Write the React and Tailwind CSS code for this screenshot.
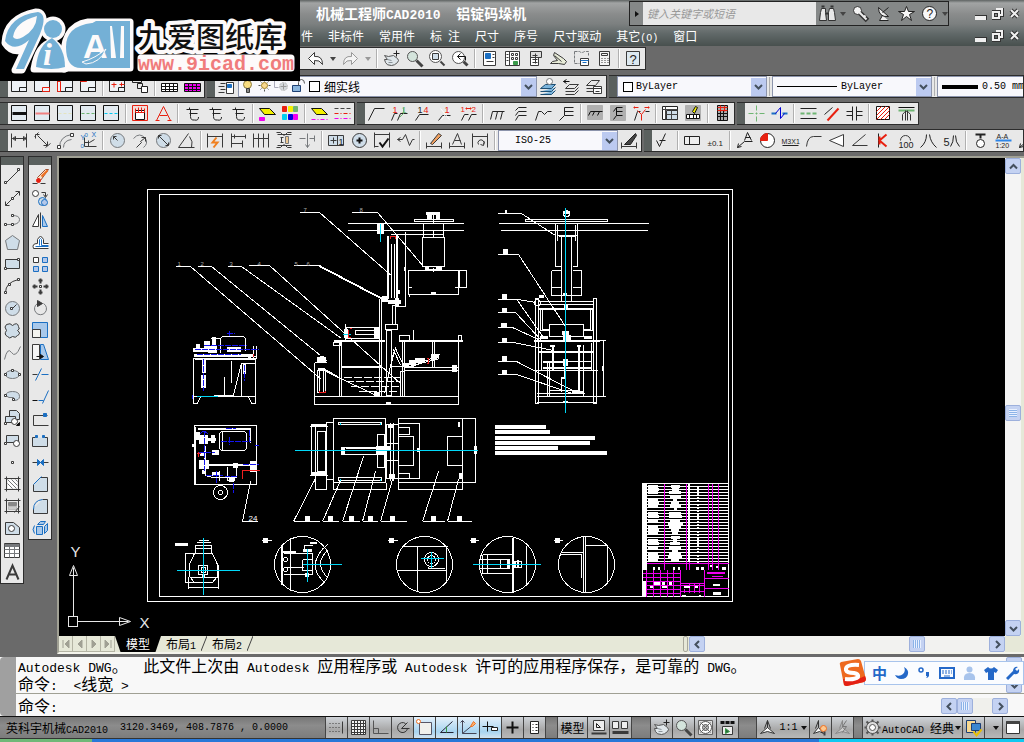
import React from "react";

const K = "#3a3a3a";
const G = "#76797c";
const B = "#1b6fc2";
const R = "#e82010";
const M = "#f000f0";
const L = "#cfdde8";
const GR = "#6fb573";

const c = (x, y, r) => `M${x - r} ${y}a${r} ${r} 0 1 0 ${2 * r} 0a${r} ${r} 0 1 0 ${-2 * r} 0z`;
const r = (x, y, w, h) => `M${x} ${y}h${w}v${h}h${-w}z`;
const t = (text, x, y, size, fill = "#222") => ({ text, x, y, size, fill });

/* Every glyph is a list of [path, stroke, fill, width, dash] or of text items, on a 17px grid. */
const line = (color, w, dash) => [[r(0, 0, 15, 15), "#111", "#e2eaf0"], ["M1 8h14", color, "none", w, dash]];
const hookE = [["M2 4h12M5 2v2M5 8h8M6 4v7q0 4 4 3.500q4 1 4-3", "#222"]];
const table = (color) => [[r(0, 5, 16, 8), "#111", color], ["M4 5v8M8 5v8M12 5v8M0 8h16M0 11h16", "#111"]];

const icons = {
  vp1: [[r(0, 0, 15, 13), "#222", "#eef2f6"], [r(8, 9, 7, 4), "#222"]],
  vp2: [[r(0, 0, 15, 13), "#222", "#eef2f6"], [r(8, 9, 7, 4), R]],
  vp3: [[r(0, 0, 15, 13), "#222", "#eef2f6"], [r(8, 9, 7, 4), "#222"], [r(0, 3, 3, 10), R]],
  vp4: [[r(0, 0, 15, 13), "#222", "#eef2f6"], [r(8, 9, 7, 4), "#222"], [r(0, 0, 6, 3), R, R]],
  vp5: [[r(0, 0, 15, 13), "#222", "#eef2f6"], [r(9, 9, 6, 4), "#222"], ["M2 6h5M4.500 4v5M10 6h5M12 4v4", R]],
  vp6: [[r(0, 0, 9, 4), "#222"], [r(5, 5, 5, 5), "#222"], [r(9, 8, 6, 6), "#222", "#fff"]],
  grid1: table("#fff"),
  grid2: table(M),
  l1: line("#111", 3),
  l2: line("#f08080", 2),
  l3: line("#e4e4c0", 1, "3 2"),
  l4: line(GR, 1, "3 2"),
  l5: line("#00c8f0", 1, "3 2"),
  calip: [[r(0, 0, 15, 15), R, "#f3dcd8"], [r(3, 5, 9, 9), "#111", "#fff"], ["M3 3v4h9V3M6 2v5M9 2v5", R]],
  redA: [["M1 15L8 1l7 14M4 10h8M0 15h4M12 15h4", R]],
  e1: hookE,
  e2: hookE,
  e3: hookE,
  eraseY: [["M0 3h10l6 6H5z", "#111", "#f4f000"], [r(0, 12, 5, 3), M, M]],
  pal: [
    [r(0, 1, 4, 5), R, R], [r(6, 1, 4, 5), "#f4f000", "#f4f000"], [r(11, 1, 4, 5), GR, GR],
    [r(0, 9, 4, 5), "#00d0f0", "#00d0f0"], [r(6, 9, 4, 5), "#0000e0", "#0000e0"], [r(11, 9, 4, 5), M, M],
  ],
  eraseL: [["M0 3h10l6 6H5z", "#111", "#f4f000"], ["M0 14h16", M, "none", 1, "4 2 1 2"]],
  dashes: [["M0 3h16", "#444", "none", 1, "4 2"], ["M0 8h16", R, "none", 1, "4 2 1 2"], ["M0 13h16", M, "none", 1, "4 2 1 2"]],
  ld1: [["M0 15L6 3h10", "#222"]],
  ld2: [["M0 15l3-7h3M6 15l3-7h7", "#222"], ["M12 2v6l-4 4", GR], t("1", 1, 7, 9, R), t("1", 10, 7, 9, GR)],
  ld3: [["M1 15l4-6h9", "#222"], t("1", 3, 7, 9), t("4", 9, 7, 9, R)],
  ld4: [["M1 15l4-5h8", "#222"], ["M3 3l9 11M12 4L4 14", "#fff"], t("1", 7, 7, 9, R)],
  ld5: [["M1 15l3-6h4M8 15l3-6h5", "#222"], t("1", 0, 6, 8, R), t("2", 11, 6, 8, R), ["M5 3h6M6 2v2M10 2v2", R]],
  mm: [["M1 14l2-8h12M6 14l2-8M11 14l2-8", "#222"]],
  st: [["M3 15l3-5h8M3 10l3-4h8M3 5l3-3h8", "#222"]],
  yy: [["M0 15l3-9h3l3 3 3-3h4", "#222"]],
  yf: [["M1 15l5-5h9M6 10V2h9M6 6h9", "#222"]],
  mmg: [[r(0, 0, 15, 14), "#b0b0b0", "#b0b0b0"], ["M1 10l2-4h12M5 10l2-4M10 10l2-4", "#111"]],
  stg: [[r(0, 0, 15, 15), "#b0b0b0", "#b0b0b0"], ["M3 14l3-4h6M6 10V2h6M6 6h6M3 6l3-4", "#111"]],
  yr: [["M1 15l3-9 3 0M12 6h4", "#222"], ["M8 15V9L4 5M8 9l4-5M0 2h5M1 1v2M16 2h-5M15 1v2", R]],
  tb1: [[r(0, 1, 15, 13), "#222", "#fff"], [r(4, 5, 11, 9), "#333", L], ["M0 4h15M3 1v13M4 9h11M9 5v9", "#444"]],
  tb2: [[r(0, 0, 15, 15), "#b0b0b0", "#b0b0b0"], [r(1, 9, 13, 4), "#111", "#fff"], ["M4 9v4M8 9v4M11 9v4", "#111"], ["M7 6l3-5 2 1-3 6z", "#111", "#f4f000"]],
  tb3: [[r(3, 0, 10, 15), "#111", "#aaa"], ["M6 5v10M9 5v10M3 8h10M3 11h10", "#111"], ["M3 2h10M3 5h10M6 0v6M10 0v6", R]],
  cross: [["M8 0v16M0 8h16", GR, "none", 1, "5 2 2 2"]],
  zig: [["M0 8h5M11 8h5", B, "none", 2], ["M4 8l5-6v11l4-5", "#0000d8"]],
  par: [["M0 3h16M0 13h16", "#222"], ["M0 8h16", GR, "none", 2, "4 2"]],
  sl: [["M1 9L9 2", "#222"], ["M4 15L15 3", R, "none", 2]],
  cap: [["M6 1v14M10 1v14M0 6h6M0 10h6M10 6h6M10 10h6", "#222"]],
  hatchR: [[r(1, 1, 13, 13), "#111", "#fff"], ["M1 6l5-5M1 10l9-9M1 14L14 1M5 14l9-9M9 14l5-5", R]],
  thread: [["M0 2h16", "#111"], ["M0 5h16", GR, "none", 2], ["M4 15V9q4-6 8 0v6M7 15V5M9 15V5", "#333"]],
  dLin: [["M0 1v14M15 1v14M1 6h14M1 6l3-2v4zM15 6l-3-2v4z", K]],
  dAli: [["M3 3l10 10M4 0L0 4M16 11l-5 4M1 6V2h4M13 9v4h-4", K]],
  dArc: [["M2 15q0-11 12-13M6 15q0-7 8-8", G], [r(0, 13, 3, 3), K, "#fff"], [r(13, 1, 3, 3), K, "#fff"]],
  dOrd: [["M4 5v9h12M8 8v6M4 10h5l5-3", K], t("Y", 0, 7, 7, B), t("0", 4, 4, 6, B), t("X", 11, 4, 7, B), t("0", 0, 15, 6, B)],
  dRad: [[c(8, 8, 7), G, L], ["M8 8L4 4M4 7V4h3", K]],
  dJog: [["M1 6q6-7 12 0q3 5-2 9", G], ["M13 5l-5 4 1 1-5 5M9 5h4v4", K]],
  dDia: [[c(8, 8, 7), G, L], ["M3 3l10 10M3 6V3h3M13 10v3h-3", K]],
  dAng: [["M10 1L0 15h16M11 4q4 5 2 11", K]],
  dQk: [["M0 1v14M15 1v14M0 4h15", K], ["M9 5l-4 5h5l-4 5", "#f08020", "none", 2]],
  dBas: [["M1 1v14M1 4h14M1 11h11M15 2v4M12 8v7M4 2v4", K]],
  dCon: [["M0 1v14M5 1v14M10 1v14M15 1v14M0 6h15", K]],
  dSp: [["M0 0h4l3 3M15 0h-4L8 3M0 15h4l3-3M15 15h-4l-3-3M1 2h14M1 13h14", K], ["M4 5h3M5 5v5M4 10h3", K], [r(9, 4, 3, 7), G, "#eec890"]],
  dBrk: [["M0 6h6M10 6h5M8 1v14M15 3v6M6 12l2 3 2-3", G]],
  tol: [[r(0, 3, 15, 10), K, L], ["M9 3v10M5 5v6M2 8h6", K], t("1", 10, 12, 9)],
  cen: [[c(8, 8, 7), K, L], ["M5 8h6M8 5v6", "#111", "none", 2]],
  insp: [["M0 2h15M0 0v15M15 0v15M0 14h4", K], ["M5 10l3 4 6-8", "#111", "none", 2]],
  jogl: [["M0 7l3-2M0 7h5l3-5 4 11 3-6h2M0 7l3 2", K]],
  dEd: [["M0 10v6M15 10v6M0 14h15", K], ["M4 11L12 1l3 2-9 9z", K, "#f0a060"]],
  dTe: [["M0 10v6M15 10v6M0 14h15M3 12L8 1l4 11M5 8h6", K]],
  dUp: [["M0 1v14M15 1v14M0 4h15", K], ["M6 12a3 3 0 1 1 5 0M12 9l-1 4-3-1", K]],
  dSt: [["M0 10v6M15 10v6M0 14h15", K], ["M3 12L14 1l1 2-6 9z", "#222", "#444"]],
  rough: [["M1 8l3 6L10 1M4 8h6", "#222"]],
  datum: [[r(0, 4, 15, 8), "#222", "#eee"], ["M5 4v8", "#222"]],
  pm: [t("±0.1", 0, 13, 8)],
  ldA: [["M1 15l7-6h8M1 15l4-1M1 15l1-4M8 8l3-8 4 8M9 5h5", "#222"]],
  pie: [[c(8, 8, 7), "#222", "#fff"], ["M8 8V1A7 7 0 0 0 1 8z", R, R]],
  m3: [t("M3X1", -1, 11, 7), ["M0 13h16", "#222"]],
  ch: [["M1 14q1-10 7-10h8", K]],
  tri: [["M1 8l14-6v12z", K, "#fff"]],
  ang: [["M14 2L1 13h15", K]],
  kk: [["M4 1v14", "#222"], ["M12 2L5 8l7 6M5 8V4M5 8v4", R, "none", 2]],
  arc100: [["M3 8a5 5 0 0 1 10 0", K], t("100", 1, 15, 9)],
  ba: [["M6 2q0 8-6 13M9 2q1 8 7 13", "#222"]],
  ba5: [t("5", 0, 13, 11), ["M10 3q0 7-3 11M12 3q0 7 4 11", "#222"]],
  bal: [["M3 2h10M8 2v4", "#222", "none", 2], [c(8, 11, 4), "#222", "#fff"]],
  aa: [t("A-A", 1, 6, 7), ["M0 8h16", "#2e86e8", "none", 2], t("1:20", 0, 15, 7)],
  undo: [["M7 2v4q8-1 8 8q-3-5-8-4v4L1 8z", K, "#fff"]],
  redo: [["M9 2v4q-8-1-8 8q3-5 8-4v4l6-6z", "#999", "#f4f4f4"]],
  pan: [["M1 5l4 1 5-1 4 3q2 2 0 4-3 3-6 3-5 0-6-3l-1-3 3 0z", "#555", "#dfe6ea"], ["M4 9l4 1M5 12l4 0", "#8a9298"], ["M13 0v6M10 3h6", "#222"]],
  zoom: [["M10 10l6 6", "#444", "none", 3], [c(6, 6, 5), "#555", "#d4e4dc"]],
  zoomW: [["M11 11l4 4", "#444", "none", 2], [c(6, 6, 6), "#555", "#fff"], [r(3, 3, 6, 6), K, L]],
  zoomP: [["M11 11l4 4", "#444", "none", 3], [c(6, 7, 6), "#555", "#fff"], ["M5 6h8v4M5 6l3-3M5 6l3 3", "#111"]],
  prop: [[r(2, 1, 12, 14), K, "#fff"], [r(4, 3, 5, 5), B, B], ["M11 4h2M11 7h2M5 11h7", K]],
  dc: [[r(1, 1, 14, 14), K, "#fff"], [r(7, 3, 2, 2), K], [r(11, 3, 2, 2), K], [r(7, 7, 2, 2), K], [r(11, 7, 2, 2), K], ["M5 1v14M2 4h2M2 7h2M2 10h2", K], [r(9, 11, 4, 3), "#3a9a4a", "#3a9a4a"]],
  tp: [[r(3, 3, 8, 12), K, "#fff"], [r(3, 1, 11, 6), K, "#ddd"], ["M5 5h5M5 9h5M5 12h5M8 3v10", K]],
  sheet: [["M0 13h8l6 1 2-3-3-3-9-6-1 3 4 5-5 1z", K, "#e8ecd8"], ["M4 5l7 6", K]],
  mark: [["M1 1h5q2 2 5 0h4v4M1 1v12h5", G, "none", 1, "3 1"], [r(7, 8, 8, 7), K, "#fff"], ["M7 10h8M9 12h4", B]],
  calc: [[r(3, 1, 10, 14), K, "#f4f4f4"], [r(5, 3, 6, 2), K], ["M5 8h7M5 10h7M5 12h7", K, "none", 1, "1 2"]],
  help: [[r(1, 1, 13, 14), K, "#dce8f0"], t("?", 4, 13, 13)],
  lyr: [[r(8, 4, 7, 11), K, "#fff"], [r(9, 6, 4, 3), B, B], ["M0 2h8M2 5h5M0 8h6M2 11h5M0 14h6", K]],
  ly1: [["M0 10h11l4-4H5zM0 13h11l4-4M0 16h11l4-4", "#1d4f74", "#7ab4dc"], [c(9, 3, 3), G, "#fff"]],
  ly2: [["M2 10h9l4-4H6zM2 13h9l4-4M2 16h9l4-4", K], ["M0 3h6M0 3l3-2M0 3l3 2", "#111"]],
  ly3: [["M0 7h9l4-5H5zM0 10h8M0 13h7", K], [r(7, 8, 8, 7), K, "#fff"], ["M7 10h8M9 13h4", K]],
  bulb: [[c(8, 6, 4), "#8a7a40", "#f8dc80"], [r(7, 10, 3, 4), K, "#888"]],
  sun: [[c(8, 7, 3), "#a08020", "#f8d890"], ["M8 1v2M8 11v2M2 7h2M12 7h2M4 3l1 1M12 3l-1 1M4 11l1-1M12 11l-1-1", "#555"]],
  frz: [[c(10, 8, 4), "#bbb", "#d4d8dc", 1, "2 1"], ["M1 1v8h4M1 1h3", "#aab"], ["M10 5v6M7 8h6", "#999"]],
  lock: [[r(2, 7, 8, 6), "#1d3f74", "#8ab4dc"], ["M8 7V4q0-3 3-3t3 4", "#555"]],
  pLine: [["M2 14L14 2", K], [r(0, 13, 2, 2), K, "#fff"], [r(13, 0, 2, 2), K, "#fff"]],
  pXl: [["M1 15L15 1M1 11v4h4M15 5V1h-4", K], [r(7, 7, 2, 2), K, "#fff"]],
  pPl: [["M1 12h8q6-1 6-5t-7-4", G, "none", 1], [r(0, 11, 2, 2), K, "#fff"], [r(7, 11, 2, 2), K, "#fff"], [r(7, 2, 2, 2), K, "#fff"]],
  pPg: [["M8 1l7 5-2 9H3L1 6z", G, L]],
  pRe: [[r(1, 3, 14, 9), K, L], [r(0, 11, 2, 2), K, "#fff"], [r(13, 2, 2, 2), K, "#fff"]],
  pAr: [["M1 14q0-10 13-13", K], [r(0, 13, 2, 2), K, "#fff"], [r(4, 5, 2, 2), K, "#fff"], [r(13, 0, 2, 2), K, "#fff"]],
  pCi: [[c(8, 8, 7), G, L], ["M8 8l4-4", K], [r(6, 7, 2, 2), K, "#fff"]],
  pCl: [["M8 3q5-4 6 1 2 3-1 4 4 3 0 5-2 3-5 1-3 3-5 0-4-2-1-6-3-4 0-6 4-2 6 1z", K, L]],
  pSp: [["M0 15Q3 2 7 8t9-6", G, "none", 1]],
  pEl: [["M1 8a7 4 0 1 0 14 0a7 4 0 1 0-14 0", G, L], [r(0, 7, 2, 2), K, "#fff"], [r(7, 3, 2, 2), K, "#fff"], [r(14, 7, 2, 2), K, "#fff"]],
  pEa: [["M1 7q1-4 7-4 7 0 7 5 0 4-6 4V9q-5 1-8-2z", G, L], [r(0, 6, 2, 2), K, "#fff"], [r(8, 10, 2, 2), K, "#fff"]],
  pIn: [["M5 0h7l3 3v6H5z", K, L], [r(1, 6, 10, 6), K, L], [c(10, 11, 3), K, "#fff"], ["M12 15h3v-3z", "#111", "#111"], [r(0, 12, 2, 2), K, "#fff"]],
  pBl: [[r(2, 3, 12, 7), K, L], [c(12, 11, 3), K, "#fff"], [r(0, 10, 2, 2), K, "#fff"]],
  pPt: [[r(7, 7, 2, 2), K, "#fff"]],
  pHa: [["M2 0v15M14 0v15M0 2h16M0 13h16", K], [r(3, 3, 10, 9), "#eee", "#fff"], ["M3 3l9 9M7 3l6 6M3 7l5 5M11 3l2 2", G]],
  pGr: [["M2 0v15M14 0v15M0 2h16M0 13h16", K], [r(4, 4, 8, 3), "#888", "#888"], [r(4, 8, 8, 3), "#bbb", "#ccc"], ["M10 14l5-6", K]],
  pRg: [["M1 2h8l6 5v7H1z", K, L], [c(7, 8, 3), K, "#fff"]],
  pTa: [[r(0, 1, 15, 14), K, "#fff"], ["M0 3h15", G, "none", 3], ["M0 7h15M0 11h15M5 4v11M10 4v11", G]],
  pTx: [["M2 15L8 1l6 14M4 10h8", K, "none", 2]],
  mEr: [["M0 15h16", K, "none", 1, "5 3"], ["M5 9l8-8h3l-8 11z", "#a05030", "#f6e0c8"], [c(6, 12, 2), R, R], ["M9 8L15 2", "#f07020", "none", 2]],
  mCo: [[c(3, 3, 3), K, "#fff"], [c(10, 11, 4), B, L], [c(12, 12, 3), B, "#b4c8ea"], ["M9 2h4v4M11 4l2 3 2-3", K]],
  mMi: [["M0 14h6V2z", K, "#fff"], ["M15 14h-5V3z", B, "#a8c8ea"], ["M8 0v16", K]],
  mOf: [["M16 14H1q-2-5 4-5V5q3-6 6 0v4h5", K, "#fff"], ["M16 12H3M7 11V5q1-2 2 0v6h7", B]],
  mAr: [[r(1, 1, 5, 5), K, "#fff"], [r(10, 1, 5, 5), B, "#b4c8ea"], [r(1, 10, 5, 5), B, "#b4c8ea"], [r(10, 10, 5, 5), B, "#b4c8ea"]],
  mMv: [[r(7, 7, 2, 2), K, "#fff"], ["M8 0v5M8 11v5M0 8h5M11 8h5M6 2h4M6 14h4M2 6v4M14 6v4", K, "none", 2]],
  mRo: [["M5 3a6 6 0 1 0 6 0", G, "none", 1], ["M5 0l5 3-5 3z", K, K]],
  mSc: [[r(0, 0, 15, 15), B, "#a8c8ea"], [r(0, 7, 8, 8), K, "#f4f4f0"]],
  mSt: [[r(0, 0, 7, 15), K, "#f4f4f4"], ["M8 0h3l5 15H8z", B, "#a8c8ea"], ["M4 12h6M8 10l3 2-3 2z", "#111", "#111"]],
  mTr: [["M0 8h5", K], ["M3 14l6-12M9 8h7", B, "none", 1, "14 1 3 1"]],
  mEx: [["M0 12h5", "#111"], ["M6 12h5M10 15l6-13", B]],
  mBp: [["M15 5H1v10h15", K], [r(11, 3, 3, 3), B, B]],
  mBr: [["M0 5v9h15V5M0 5h3M12 5h3", K, L], [r(3, 3, 2, 2), B, B], [r(10, 3, 2, 2), B, B]],
  mJo: [["M0 8h16", K], ["M5 5v6l3-3zM11 5v6l-3-3z", B, B]],
  mCh: [["M8 1h7v14H1V8", K, L], ["M1 8l8-8", B, "none", 1]],
  mFi: [["M10 1h5v14H1V10", K, L], ["M1 11q0-9 9-10", B, "none", 1]],
  mXp: [[r(4, 6, 6, 8), B, "#a8c8ea"], ["M5 4l3-3h5l-2 3zM12 6l3-3v7l-3 3zM2 5q-3 4 0 8", B, "#a8c8ea"]],
  sSn: [["M1 4h12M1 8h12M1 12h12", K, "none", 1, "1 2"], ["M14 2v12", K]],
  sGr: [["M1 1h14v14H1zM4 1v14M7 1v14M10 1v14M13 1v14M1 4h14M1 7h14M1 10h14M1 13h14", K, "#f4f4f4"]],
  sOr: [["M1 1v13h15M1 9h5v5", "#555"]],
  sPo: [["M11 4a5 5 0 1 0 2 5M7 9l6-6M7 9h8", "#333"]],
  sOs: [[r(3, 3, 12, 12), "#556", "#f0f0ec"], [c(2, 2, 2), "#f07020", "#fff"]],
  s3d: [["M14 2L2 13h13", "#223"], ["M8 7v6", "#3a9a4a"]],
  sDu: [["M2 1v13h14M2 14L14 4M0 3l2-2 2 2", "#445"], ["M10 7l3-5 2 2-3 3z", "#f07020", "#f8b070"]],
  sDy: [["M5 2v10M0 7h11", "#111"], [r(9, 8, 6, 3), "#222", "#fff"]],
  sLw: [["M8 2v12M2 8h12", "#111", "none", 2]],
  sQp: [[r(4, 2, 8, 12), "#222", "#fff"], ["M6 5h1M9 5h2M6 8h1M9 8h2M6 11h1M9 11h2", "#222"]],
  sL1: [[r(3, 1, 11, 10), K, "#eee"], ["M6 4v4h4z", "#222"], ["M1 14h15", K, "none", 2]],
  sL2: [[r(0, 2, 6, 7), K, "#eee"], [r(9, 2, 6, 7), K, "#eee"], ["M0 13h16", K, "none", 3]],
  whl: [[r(1, 1, 14, 14), "#666", "#e0e0e0"], [c(8, 8, 6), "#555", "#fff"], [c(8, 8, 3), "#555", "#bbb"], ["M3 3l10 10M13 3L3 13", "#666"]],
  mot: [["M1 3h14", "#111", "none", 3, "4 1"], [r(3, 7, 10, 8), K, "#eee"], ["M6 9v5l4-2z", "#3a9a4a", "#2a6a3a"]],
  ann: [["M8 1v7l-7 6 7-2 7 2-7-6M8 1L5 9M8 1l3 8", "#333", "#fff"]],
  annV: [["M6 1v7l-5 6 6-2 4 2-5-6M6 1L3 9", "#333", "#fff"], [c(11, 9, 3), "#f07020", "#fcc890"], ["M12 12v4", "#444", "none", 2]],
  annA: [["M8 1v7l-7 6 7-2 7 2-7-6M8 1L5 9", "#888", "#ccc"], ["M12 1L8 7h4l-4 6", "#777"]],
  gear: [[c(8, 8, 6), "#555", "#ddd"], [c(8, 8, 3), "#555", "#fff"], ["M8 0v2M8 14v2M0 8h2M14 8h2M2 2l2 2M14 2l-2 2M2 14l2-2M14 14l-2-2", "#555", "none", 2]],
  doc: [[r(1, 1, 9, 12), "#1d3f74", "#f8d890"], [r(6, 4, 9, 7), "#1d3f74", "#3a86d0"], ["M8 12l3 4 5-6", "#e8c000", "none", 2]],
  win: [[r(1, 2, 13, 12), "#333", "#fff"], ["M1 3h13", "#444", "none", 3]],
  bino: [["M2 3h4v4l1 8H0l1-8zM10 3h4l1 4 1 8H9V7z", "#333", "#e8e8e8"], ["M6 8h3M2 1h3M11 1h3", "#333", "none", 2]],
  key: [["M7 7l8 8M11 12l2-2", "#333", "none", 5], [c(5, 5, 4), "#333", "#f4f4f4"], ["M7 7l7 7M11 12l2-2", "#eee", "none", 2]],
  sat: [["M3 2q0 10 10 9zM7 7l6-5M7 10l-3 5h9", "#222", "#f0f0f0"]],
  star: [["M8 1l2 5h6l-5 3 2 6-5-4-5 4 2-6-5-3h6z", "#222", "#f8f8f8"]],
  qm: [[c(8, 8, 7), "#222", "#f8f8f8"], t("?", 5, 12, 12)],
};

function Icon({ name, className = "" }) {
  return (
    <svg viewBox="-0.5 -0.5 17 17" width="17" height="17" aria-hidden="true" className={"block shrink-0 overflow-visible " + className}>
      {icons[name].map((s, i) =>
        s.text ? (
          <text key={i} x={s.x} y={s.y} fontSize={s.size} fill={s.fill} fontFamily="Liberation Sans, sans-serif">{s.text}</text>
        ) : (
          <path key={i} d={s[0]} stroke={s[1]} fill={s[2] || "none"} strokeWidth={s[3] || 1} strokeDasharray={s[4]} />
        )
      )}
    </svg>
  );
}

function Tool({ name }) {
  return (
    <button type="button" aria-label={name} className="flex h-[21px] w-[23px] shrink-0 items-center justify-center hover:bg-sky-100">
      <Icon name={name} />
    </button>
  );
}

function Tools({ list }) {
  return list.split(" ").map((n, i) =>
    n === "|" ? <span key={i} className="mx-[2px] h-[19px] w-[2px] shrink-0 self-center border-l border-[#b0b0b0] bg-white" /> : <Tool key={i} name={n} />
  );
}

const Grip = () => (
  <span className="flex w-[8px] shrink-0 self-stretch items-center justify-center bg-[#5a605e]">
    <span className="h-[17px] w-[5px] bg-[radial-gradient(#111_40%,transparent_45%)] bg-[length:2px_2px]" />
  </span>
);

const Bar = ({ children, className = "" }) => (
  <div className={"flex h-[23px] shrink-0 items-center overflow-hidden border-y border-r border-[#2c2c2c] bg-[#e8e8e8] " + className}>
    <Grip />
    {children}
  </div>
);

/* Latin runs take the half-width mono face, the rest stays in the CJK face. */
function Mixed({ children, latin }) {
  return children.split(/([\x20-\x7e]+)/).map((s, i) => (i % 2 ? <span key={i} className={"leading-none whitespace-pre " + latin}>{s}</span> : s));
}

const Chevron = ({ d }) => (
  <svg viewBox="0 0 9 9" width="9" height="9" aria-hidden="true" className="block shrink-0"><path d={d} stroke="#44505e" strokeWidth="2" fill="none" /></svg>
);
const CH = { down: "M1 3l3.500 3.500L8 3", up: "M1 6.500L4.500 3 8 6.500", left: "M6 1L2.500 4.500 6 8", right: "M3 1l3.500 3.500L3 8" };

function Combo({ label, options, children, className = "", selectClass = "" }) {
  return (
    <div className={"flex h-[21px] shrink-0 items-center border border-[#8c94ac] bg-[#f8f8fc] " + className}>
      {children}
      <select aria-label={label} className={"min-w-0 flex-1 appearance-none self-stretch bg-transparent text-black outline-none " + selectClass}>
        {options.map((o) => <option key={o}>{o}</option>)}
      </select>
      <span className="pointer-events-none flex h-[18px] w-[15px] shrink-0 items-center justify-center bg-[#bccaf0]"><Chevron d={CH.down} /></span>
    </div>
  );
}

const Arrow = ({ dir, className = "" }) => (
  <button type="button" aria-label={"Scroll " + dir} className={"flex h-4 w-4 shrink-0 items-center justify-center rounded-xs border border-[#9db0dc] bg-[#c4d2f2] " + className}>
    <Chevron d={CH[dir]} />
  </button>
);
const Thumb = ({ vertical }) => (
  <span className="flex h-4 w-4 shrink-0 items-center justify-center rounded-xs border border-[#9db0dc] bg-[#c4d2f2]">
    <span className={vertical ? "h-[8px] w-[8px] bg-[repeating-linear-gradient(0deg,#8cb4e8_0_1px,#e8f0ff_1px_2px)]" : "h-[8px] w-[8px] bg-[repeating-linear-gradient(90deg,#8cb4e8_0_1px,#e8f0ff_1px_2px)]"} />
  </span>
);

function Logo() {
  const outline = { stroke: "#fdfafa", strokeLinejoin: "round", paintOrder: "stroke" };
  const blue = "#74b0d6";
  return (
    <div className="absolute top-0 left-0 z-10 bg-black">
      <svg viewBox="0 0 300 81" width="300" height="81" role="img" aria-label="九爱图纸库" className="block">
        <g fill="#fdfafa" stroke="#fdfafa" strokeWidth="7" strokeLinejoin="round">
          <path d="M5 43Q6 18 36 12q9 0 7 14L22 70h-7l10-21Q12 54 5 43z" />
          <path d="M64 69Q60 26 88 22h42v46H64z" />
          <circle cx="53" cy="29" r="9" />
          <path d="M34 69q4-24 18-27 12 6 13 27z" />
          <path d="M141 58H291V68H141z" />
        </g>
        <path d="M16 69l13-29q-15 13-24 1Q8 16 38 12q10 2 2 22L24 69z" fill={blue} />
        <path d="M13 37Q15 22 37 16q-1 14-14 21-7 4-10 0z" fill="#fdfafa" />
        <circle cx="53" cy="29" r="9" fill={blue} />
        <path d="M36 67q2-22 16-29 13 10 13 29-13 4-29 0z" fill={blue} />
        <g fontFamily="Liberation Serif, serif" fontStyle="italic" fontWeight="700">
          <text x="43" y="65" fontSize="32" fill="#fdfafa">i</text>
        </g>
        <path d="M92 23Q66 26 66 47t15 21h49V21h-34q-18 9-20 27 0 12 5 12-2-18 17-33z" fill={blue} />
        <g fontFamily="Liberation Sans, sans-serif" fontWeight="700" fill="#fdfafa">
          <text x="83" y="58" fontSize="34">A</text>
          <path d="M110 26h2l4 32h-5zM121 26h3v32h-4z" />
        </g>
        <path d="M82 62q14-4 24-13-6 14-20 15z" fill={blue} stroke="#fdfafa" />
        <text x="138" y="48" fontSize="29" fontWeight="500" fill="#111" strokeWidth="8" fontFamily="Noto Sans CJK SC, sans-serif" {...outline}>九爱图纸库</text>
        <text x="138" y="70" fontSize="20" fontWeight="700" fill="#f07c7c" fontFamily="Liberation Mono, monospace">www.9icad.com</text>
      </svg>
    </div>
  );
}

const WinButtons = () => (
  <div className="flex w-[75px] shrink-0 items-center justify-end gap-[5px] pr-[3px]">
    {[["Minimize", "M1 9h9v2H1z"], ["Restore", "M4 1h6v6H8M1 4h6v6H1z"], ["Close", "M2 2l7 7M9 2L2 9"]].map(([n, d]) => (
      <button key={n} type="button" aria-label={n}>
        <svg viewBox="0 0 12 12" width="12" height="12" className="block">
          <path d={d} stroke="#333" strokeWidth="4" fill="none" /><path d={d} stroke="#f0f0f0" strokeWidth="2" fill="none" />
        </svg>
      </button>
    ))}
  </div>
);

const Caret = ({ color }) => <svg viewBox="0 0 6 4" width="6" height="4" aria-hidden="true" className="shrink-0"><path d="M0 0h6L3 4z" fill={color} /></svg>;

function Header() {
  const menus = ["件", "非标件", "常用件", "标 注", "尺寸", "序号", "尺寸驱动", "其它(O)", "窗口"];
  return (
    <header className="flex h-[46px] shrink-0 flex-col bg-[linear-gradient(#5f6463_0,#a2a4a4_3px,#8a8c8c_14px,#7c8080_24px,#606868_34px,#48504e_46px)] text-white">
      <div className="flex h-[26px] pt-[1px]">
        <h1 className="min-w-0 flex-1 truncate pl-[316px] text-sm leading-6 font-bold"><Mixed latin="font-[Liberation_Mono] text-[13px]">机械工程师CAD2010  铝锭码垛机</Mixed></h1>
        <div className="flex w-[320px] shrink-0 items-center border border-[#222] bg-[#858888]">
          <button type="button" aria-label="Expand" className="flex w-[13px] shrink-0 justify-center"><svg viewBox="0 0 4 6" width="4" height="6"><path d="M0 0v6l4-3z" fill="#111" /></svg></button>
          <input aria-label="搜索" placeholder="键入关键字或短语" className="w-[180px] min-w-0 self-stretch bg-[#e8e8e8] px-1 text-[11px] italic placeholder:text-[#999]" />
          <button type="button" aria-label="Search" className="ml-[3px]"><Icon name="bino" /></button>
          <span className="ml-1"><Caret color="#444" /></span>
          <button type="button" aria-label="Key" className="ml-[6px]"><Icon name="key" /></button>
          <button type="button" aria-label="Communication" className="ml-[6px]"><Icon name="sat" /></button>
          <button type="button" aria-label="Favorites" className="ml-[6px]"><Icon name="star" /></button>
          <button type="button" aria-label="Help" className="ml-[6px]"><Icon name="qm" /></button>
          <span className="ml-1"><Caret color="#444" /></span>
        </div>
        <WinButtons />
      </div>
      <div className="flex h-[20px] items-center">
        <nav className="flex min-w-0 flex-1 gap-[15px] pl-[301px] text-xs leading-5 whitespace-nowrap">
          {menus.map((m) => <a key={m} href="#menu"><Mixed latin="font-[Liberation_Mono] text-[10px]">{m}</Mixed></a>)}
        </nav>
        <WinButtons />
      </div>
    </header>
  );
}

function Toolbars() {
  return (
    <div className="flex shrink-0 flex-col gap-[4px] overflow-hidden pt-[1px] pb-[4px]">
      <div className="mb-[1px] flex">
        <div className="ml-[300px] flex h-[23px] items-center border-y border-r border-[#2c2c2c] bg-[#e8e8e8] pl-1">
          <Tool name="undo" /><span className="px-[3px]"><Caret color="#444" /></span>
          <Tool name="redo" /><span className="px-[3px]"><Caret color="#999" /></span>
          <Tools list="| pan zoom zoomW zoomP | prop dc tp sheet mark calc | help" />
        </div>
      </div>
      <div className="flex gap-[2px]">
        <Bar><Tools list="vp1 vp2 vp3 vp4 | vp5 vp6 | grid1 grid2" /></Bar>
        <Bar>
          <Tool name="lyr" />
          <Combo label="图层" options={["细实线"]} className="w-[299px]" selectClass="pl-1 text-xs">
            <Icon name="bulb" /><Icon name="sun" /><Icon name="frz" /><Icon name="lock" />
            <span className="ml-[2px] h-[11px] w-[11px] border border-black bg-white" />
          </Combo>
          <Tools list="ly1 ly2 ly3" />
        </Bar>
        <Bar className="flex-1">
          <Combo label="颜色" options={["ByLayer"]} className="w-[150px]" selectClass="pl-[3px] font-[Liberation_Mono] text-[10px]">
            <span className="ml-[5px] h-[10px] w-[10px] border border-black bg-white" />
          </Combo>
          <span className="mx-[2px] h-[19px] w-[2px] border-l border-[#b0b0b0]" />
          <Combo label="线型" options={["ByLayer"]} className="w-[160px]" selectClass="pl-1 font-[Liberation_Mono] text-[10px]">
            <span className="ml-1 h-px w-[60px] bg-black" />
          </Combo>
          <span className="mx-[2px] h-[19px] w-[2px] border-l border-[#b0b0b0]" />
          <Combo label="线宽" options={["0.50 mm"]} className="w-[160px]" selectClass="pl-1 font-[Liberation_Mono] text-[10px]">
            <span className="ml-1 h-[4px] w-[36px] bg-black" />
          </Combo>
        </Bar>
      </div>
      <div className="flex gap-[2px]">
        <Bar><Tools list="l1 l2 l3 l4 l5 | calip redA | e1 e2 e3 | eraseY pal | eraseL dashes" /></Bar>
        <Bar><Tools list="ld1 ld2 ld3 ld4 ld5 | mm st yy yf | mmg stg yr | tb1 tb2 | tb3" /></Bar>
        <Bar><Tools list="cross zig | par sl cap | hatchR thread" /></Bar>
      </div>
      <div className="flex gap-[2px]">
        <Bar>
          <Tools list="dLin dAli dArc dOrd | dRad dJog dDia dAng | dQk dBas dCon dSp dBrk | tol cen insp jogl | dEd dTe dUp |" />
          <Combo label="标注样式" options={["ISO-25"]} className="w-[120px]" selectClass="pl-4 font-[Liberation_Mono] text-[10px]" />
          <Tool name="dSt" />
        </Bar>
        <Bar className="flex-1"><Tools list="rough | datum pm | ldA pie m3 ch tri ang kk arc100 ba ba5 | bal aa ldA" /></Bar>
      </div>
    </div>
  );
}

const Palette = ({ list, label }) => (
  <div role="toolbar" aria-label={label} className="flex w-6 shrink-0 flex-col self-start border border-[#2c2c2c] bg-[#e8e8e8]">
    <span className="flex h-[8px] items-center justify-center bg-[#5a605e]"><span className="h-[4px] w-[14px] bg-[radial-gradient(#111_40%,transparent_45%)] bg-[length:2px_2px]" /></span>
    {list.split(" ").map((n) => (
      <button key={n} type="button" aria-label={n} className="flex h-[22px] w-[22px] items-start pt-[3px] pl-[3px] hover:bg-sky-100"><Icon name={n} /></button>
    ))}
  </div>
);

/* Sheet geometry, in sheet units. */
const box = (x1, y1, x2, y2) => `M${x1} ${y1}H${x2}V${y2}H${x1}z`;

const white = [
  box(147, 189, 732, 601), box(159, 194, 728, 596),
  // leaders of the front view
  "M299 212h20L392 276M351 212h26L423 266M175 266h15L321 379M197 266h14L320 355M227 266h14L341 338M248 265h21L341 330L400 383M293 265h26L382 298M319 266L382 299",
  // beams and hoist
  "M347 223H463M347 230H463M390 234H443", box(414, 219, 453, 221), "M423 222V237M443 222V237M433 214V222M433 230V237", box(422, 237, 444, 266),
  box(408, 270, 458, 294), "M409 294v2M408 287h3M454 287h4", box(459, 270, 466, 287), "M433 267v4M428 269h12",
  // mast
  "M387 235V298M388 235V298M391 243V297M394 243V297M396 235V298M397 235V298M405 231V306H395", box(392, 305, 395, 324), box(385, 324, 397, 329), box(386, 330, 391, 395), "M379 298V396M381 298V396",
  // bench
  "M345 323v17", box(346, 327, 379, 338), box(355, 330, 379, 334), "M333 340H384M333 341H384M398 340H462M398 341H462", box(333, 342, 340, 345), box(339, 341, 341, 396), "M402 341V396M404 341V396M432 341V366M434 341V366M458 341V396M341 366H380M341 367H380M404 367H458M404 370H458",
  box(399, 335, 409, 340), "M413 329v11", box(458, 335, 461, 340), box(314, 396, 458, 404), "M314 362V396M314 362H326M317 361q4-11 9 0", box(317, 370, 325, 392), "M319 370v22M323 370v22", "M322 369L338 377L376 395M323 368L337 376",
  "M390 366L395 348L403 365M384 393L393 352M390 366H412L440 354M393 349l7 16M400 396V371h4M405 367l34-9",
  // tank elevation
  box(193, 358, 255, 396), "M193 356H255M194 359H255M231 360V382M224 376V396M213 395H233L241 363H255M241 363V396H193", "M193 396V403H197L200 396M248 396L251 403H255V396", "M220 352V339q0-3 4-3H241q4 0 4 3V350M210 338h10M253 345V358M256 345V358",
  // side view
  "M498 223H648M500 230H647", box(525, 219, 607, 221), "M555 222V266H560M577 222V266H572M557 224V240M575 224V240M561 236V300M571 236V300M557 235H576M558 236H575", "M551 270H560M572 270H581M551 270V295H581V270M551 287H560M572 287H581",
  box(535, 298, 538, 403), box(593, 298, 596, 403), "M538 301H593M538 304H593M538 308H593M538 309H593", "M540 309V330H548M542 309V329H548M590 309V329H583M592 309V330H583", box(549, 324, 583, 336), "M533 340H605M533 341H599M538 351H593M538 352H593M541 342V370M591 342V370M542 361H591M542 362H566M542 367H591M542 368H591M535 370H597M603 340V396M597 396H605M536 396H603M536 393H584M536 402H596M547 362V395M549 362V395M552 345V370M553 345V370M578 345V392M583 344V396M579 345V392M564 358V378H561V391M548 390H578",
  "M497 213h24L555 235M497 254h21L565 326M497 299h20L535 302M517 300L543 337M497 312h18L541 340M497 327h15L538 339M497 342h16L553 350M497 361h19L578 393M497 374h19L572 393",
  c(537, 302, 3), c(566, 213, 3),
  // tank plan
  box(194, 425, 256, 484), "M195 426V483M197 428H250V442M197 429H250M222 431H243q3 0 3 4V446q0 4-3 4H222q-3 0-3-4V435q0-4 3-4zM222 431V450M198 464H256M198 465H256M204 445V464M205 445V475L212 477H236V465M227 466V480H234V475M216 480V470M219 480V470", c(220, 492, 7), c(220, 492, 2), "M250 481L242 521H257",
  // main plan
  "M309 426H327M309 475H327M311 426V475M315 426V489H326V426", box(317, 431, 325, 471), box(326, 422, 333, 479), box(333, 418, 385, 482), box(338, 422, 381, 424), box(338, 477, 381, 480), box(341, 447, 385, 454), "M345 448H382", box(377, 434, 384, 467), box(386, 424, 398, 478), "M390 422V480M393 422V480M386 443H398M386 460H398M333 482V489H386V482",
  "M398 418H475V482H398zM462 418V489M398 482V489H462", box(398, 423, 419, 478), box(398, 427, 409, 434), box(398, 436, 413, 465), box(398, 473, 409, 478), box(447, 436, 462, 465),
  "M293 521H319M293 521L315 478M322 521H338M322 521L340 480M342 521H359M342 521L363 456M362 521H377M362 521L375 471M380 521H406M380 521L392 479M422 521H444M422 521L438 471M447 521H471M447 521L458 479",
  // details
  "M195 552V545H211V552M196 542H210M198 540H208M195 548H211M194 553L189 564V576L194 582H212L217 576V564L212 553zM184 553H194M184 582H198M185 553V582M188 587H218M188 576V588M218 564V588M189 577H217", box(198, 565, 207, 574), box(201, 567, 205, 572),
  c(302, 564, 28), c(424, 564, 28), c(507, 564, 28), c(586, 564, 28),
  "M281 545V584M282 545V584M290 537V590M283 553H312V574H283M283 567H303M302 559H312M302 559V570H312M304 551V545H312M304 545V551M328 543Q303 564 325 583M328 549Q312 563 328 578", c(285, 559, 2), c(285, 569, 2),
  "M401 546H447M417 546V591M446 546V582M396 570H446", c(431, 559, 7), c(431, 559, 4), "M428 566v2h16",
  "M512 537V592M513 537V592M526 545V584M482 554H512M482 554V573H512M487 554V573M479 559H509V568H479M500 559V568", box(513, 561, 521, 567),
  "M583 536V592M585 536V592M585 545H607V582M560 552H583M559 554H581V577",
];

const blobs = [
  [377, 224, 7, 10], [426, 212, 14, 3], [427, 214, 5, 5], [436, 214, 4, 5], [425, 267, 4, 3], [436, 267, 6, 3], [404, 267, 2, 4], [431, 292, 5, 2], [396, 290, 4, 4],
  [382, 296, 6, 6], [388, 300, 13, 4], [395, 298, 4, 8], [344, 329, 4, 9], [374, 327, 6, 12], [386, 402, 5, 2], [317, 357, 9, 5], [318, 368, 6, 3], [374, 392, 6, 4],
  [403, 363, 6, 3], [409, 360, 7, 5], [415, 358, 10, 5], [431, 354, 6, 6], [434, 354, 5, 4], [452, 365, 5, 7],
  [193, 348, 22, 4], [196, 344, 4, 6], [204, 341, 6, 10], [212, 337, 4, 8], [208, 346, 9, 7], [227, 347, 14, 5], [202, 359, 4, 14], [201, 375, 5, 13], [243, 364, 3, 10], [248, 355, 3, 5], [194, 354, 60, 3],
  [563, 211, 7, 3], [539, 295, 5, 3], [563, 293, 4, 2], [564, 305, 4, 4], [540, 336, 8, 3], [584, 336, 8, 3], [562, 331, 7, 4], [563, 335, 8, 5], [550, 345, 5, 2], [577, 345, 4, 2], [563, 359, 5, 7], [561, 377, 5, 2], [572, 391, 12, 2], [563, 401, 5, 2], [602, 366, 2, 5],
  [503, 249, 5, 5], [502, 294, 5, 5], [502, 308, 5, 4], [501, 323, 6, 4], [502, 338, 5, 4], [502, 356, 5, 5], [502, 370, 5, 4], [505, 210, 2, 3],
  [495, 425, 51, 4], [495, 430, 55, 4], [495, 436, 100, 4], [495, 441, 95, 4], [495, 446, 63, 4], [495, 451, 112, 4],
  [199, 435, 9, 9], [196, 432, 4, 8], [208, 438, 8, 3], [211, 435, 4, 8], [200, 452, 6, 4], [212, 450, 7, 5], [199, 460, 10, 9], [233, 463, 5, 5], [250, 461, 6, 11], [202, 470, 4, 4], [212, 472, 8, 4], [192, 444, 4, 3], [229, 477, 5, 5],
  [311, 424, 15, 3], [311, 472, 15, 3], [341, 447, 4, 7], [376, 446, 8, 8], [388, 425, 6, 3], [389, 474, 6, 5], [417, 448, 3, 4], [474, 446, 3, 8], [459, 473, 3, 6], [458, 422, 2, 5], [387, 446, 3, 5],
  [305, 516, 5, 5], [328, 516, 5, 5], [349, 516, 5, 5], [368, 516, 5, 5], [390, 516, 5, 5], [431, 516, 5, 5], [457, 516, 5, 5],
  [175, 543, 13, 3], [263, 538, 5, 5], [389, 538, 5, 5], [471, 538, 5, 5], [555, 538, 5, 5], [262, 540, 10, 1], [388, 540, 10, 1], [470, 540, 9, 1], [554, 540, 9, 1],
  [283, 551, 13, 2], [303, 549, 9, 3], [310, 542, 7, 2], [305, 573, 4, 4], [513, 561, 3, 7], [517, 560, 2, 7], [507, 559, 2, 9], [202, 574, 3, 4],
];

const cyan = ["M380 223V241M342 334H350", "M565 207V412", "M294 450H477", "M203 537V594M176 570H239", "M302 564H341M307 548V581", "M420 558H443M431 551V567", "M472 564H540", "M196 396H217", "M340 422v2M380 422v2M340 478v2M380 478v2"];
const blue = ["M194 349H258M203 345H246M229 330v5M226 333h8M196 354H240M203 358V390M244 364V380M192 394v4", "M204 430V470M199 434q4-6 9 0M220 441H250M229 436v8M205 475H222M216 470v12M236 476H224M242 464H258M249 429V441M197 452H214M254 445h4M233 482v10M225 428h10"];
const red = ["M390 238v-2h5v2M349 328h2M348 329v8h2M319 390v2h6v-2M426 358h2v5h-2M253 353v3M198 451v5M196 453h4M259 470H242V478"];

function TitleBlock() {
  const rows = Array.from({ length: 27 }, (_, i) => 483 + i * 3);
  const w = [9, 7, 12, 11, 4, 8, 11, 3, 12, 13, 10, 15, 12, 8, 6, 9, 4, 10, 12, 6, 12, 14, 8];
  return (
    <g>
      <path d={"M641 483H728V596H642V483" + rows.map((y) => `M642 ${y}H728`).join("")} stroke="#fff" />
      <path d="M664 483V569M686 483V569M689 483V569M708 483V569M712 483V569M718 483V569M642 563H728M646 569V596M653 569V596M660 569V596M667 569V596M673 569V596M680 569V596M704 569V596M642 573H680M642 577H680M642 581H680M642 585H704M642 589H680M642 593H680M680 583H704M704 578H728M704 588H728M680 591H704M684 588v4M689 583v9M694 583v9M699 583v9M706 572H724M706 573H724M711 576H722" stroke={M} />
      <g fill="#fff">
        <rect x="642" y="483" width="4" height="86" /><rect x="687" y="483" width="2" height="78" />
        {w.map((n, i) => <rect key={i} x={674 - Math.floor(n / 2)} y={484 + i * 3.4} width={n} height="3" />)}
        {w.map((n, i) => i % 4 !== 3 && <rect key={"a" + i} x="647" y={484 + i * 3.4} width={10 + (i % 2)} height="3" />)}
        {w.map((n, i) => <rect key={"b" + i} x="696" y={486 + i * 3.4} width="2" height="2" />)}
        <path d="M652 566h2v3h-2zM657 566h2v3h-2zM672 566h2v3h-2zM677 566h2v3h-2zM695 566h3v3h-3zM700 566h3v3h-3zM721 566h4v3h-4zM709 564h2v2h-2zM715 565h2v2h-2zM653 581h6v3h-6zM661 581h3v3h-3zM668 581h3v3h-3zM649 585h3v2h-3zM661 585h5v2h-5zM683 585h6v2h-6zM694 585h3v2h-3zM712 583h7v2h-7zM712 591h8v3h-8zM681 594h4v2h-4zM698 594h2v2h-2zM642 580h3v16h-3z" />
      </g>
    </g>
  );
}

function Drawing() {
  return (
    <svg className="block h-full w-full" shapeRendering="crispEdges" role="img" aria-label="铝锭码垛机">
      <g transform="translate(-58.5 -157.5)" fill="none" strokeWidth="1">
        <path d="M343 377H400M345 381H400M350 386H398M358 391H398" stroke="#fff" strokeDasharray="8 2" />
        {white.map((d) => <path key={d} d={d} stroke="#fff" />)}
        <g fill="#fff" transform="translate(-0.5 -0.5)">{blobs.map(([x, y, w, h], i) => <rect key={i} x={x} y={y} width={w} height={h} />)}</g>
        {blue.map((d) => <path key={d} d={d} stroke="#1414f0" strokeDasharray="6 1" />)}
        {cyan.map((d) => <path key={d} d={d} stroke="#00d8f8" />)}
        {red.map((d) => <path key={d} d={d} stroke="#f02020" />)}
        <TitleBlock />
        <g fill="#aaa" fontFamily="Liberation Sans, sans-serif" fontSize="6">
          {[["7", 303, 211], ["8", 359, 211], ["1", 177, 265], ["2", 200, 265], ["3", 229, 265], ["4", 257, 265], ["5", 294, 265], ["6", 306, 265]].map(([n, x, y]) => <text key={n} x={x} y={y}>{n}</text>)}
          <text x="248" y="520" fontSize="8" fill="#fff">24</text>
        </g>
        <g stroke="#e8e8e8">
          <path d="M68 616h9v10h-9zM73 616V575M77 621H120" />
          <path d="M73 565l-4 10h8zM73 567v8M130 621l-11-4v8zM128 621h-9" shapeRendering="auto" />
        </g>
        <g fill="#e8e8e8" fontFamily="Liberation Sans, sans-serif" fontSize="15"><text x="70" y="556">Y</text><text x="139" y="627">X</text></g>
      </g>
    </svg>
  );
}

function Workspace() {
  return (
    <main className="flex min-h-0 flex-1 gap-[4px]">
      <Palette label="绘图" list="pLine pXl pPl pPg pRe pAr pCi pCl pSp pEl pEa pIn pBl pPt pHa pGr pRg pTa pTx" />
      <Palette label="修改" list="mEr mCo mMi mOf mAr mMv mRo mSc mSt mTr mEx mBp mBr mJo mCh mFi mXp" />
      <section className="ml-[1px] flex min-w-0 flex-1 flex-col border-2 border-r-0 border-[#a0a094] border-b-[#f4f4ec] bg-[#e6e8d8]">
        <div className="flex min-h-0 flex-1">
          <div className="min-w-0 flex-1 bg-black"><Drawing /></div>
          <div className="mr-[3px] flex w-4 flex-col items-center bg-[#f4f4f4]">
            <Arrow dir="up" />
            <span className="basis-[231px]" />
            <Thumb vertical />
            <span className="flex-1" />
            <Arrow dir="down" />
          </div>
        </div>
        <div className="flex h-4 shrink-0 items-stretch text-xs leading-4">
          {["M3 2v8M9 2v8L5 6z", "M8 2v8L4 6z", "M4 2v8l4-4z", "M3 2v8l4-4zM9 2v8"].map((d, i) => (
            <button key={d} type="button" aria-label={"Layout " + (i + 1)} className="flex w-[14px] items-center justify-center border-r border-b border-[#b4b4a4]">
              <svg viewBox="0 0 12 12" width="12" height="12"><path d={d} stroke="#a0a094" fill="#a0a094" /></svg>
            </button>
          ))}
          <button type="button" className="w-[46px] bg-black text-white [clip-path:polygon(0_0,100%_0,88%_100%,12%_100%)]">模型</button>
          {["布局1", "布局2"].map((n) => (
            <React.Fragment key={n}>
              <button type="button" className="w-[40px] text-center text-black"><Mixed latin="font-[Liberation_Mono] text-[10px]">{n}</Mixed></button>
              <svg viewBox="0 0 6 16" width="6" height="16" aria-hidden="true" className="shrink-0"><path d="M6 0L0 15" stroke="#444" /></svg>
            </React.Fragment>
          ))}
          <span className="flex-1" />
          <span className="mr-[1px] w-[5px] rounded-xs border border-[#a8a89c]" />
          <div className="flex w-[316px] shrink-0 items-center bg-[#f2f2f0]">
            <Arrow dir="left" />
            <span className="basis-[204px]" />
            <Thumb />
            <span className="flex-1" />
            <Arrow dir="right" />
          </div>
          <span className="w-[19px]" />
        </div>
      </section>
    </main>
  );
}

function ImeBar() {
  return (
    <div className="absolute top-[2px] right-0 flex items-center">
      <svg viewBox="0 0 28 28" width="28" height="28" role="img" aria-label="S" className="relative z-10 -mr-[2px]">
        <path d="M2 6Q1 4 3 3L20 0q2 0 3 2l5 18q0 2-2 3L9 27q-2 0-3-1z" fill="#ee6a20" />
        <path d="M5 20q10 3 22-3l1 3q0 2-2 3L9 27q-2 0-3-1z" fill="#e42014" />
        <path d="M21 6Q7 5 8 11q1 3 8 3 5 1 4 4-3 3-13 2" stroke="#fff" strokeWidth="4" fill="none" />
      </svg>
      <div className="flex h-6 items-center gap-2 border border-[#a8c4ec] bg-[#fafcff] pr-[3px] pl-[7px] text-[#2468c8]">
        <button type="button" className="text-[15px] leading-5 font-bold">中</button>
        <svg viewBox="0 0 14 14" width="14" height="14"><path d="M9 1q5 3 4 7-1 5-7 5-4 0-6-4 5 2 8-1 3-3 1-7z" fill="currentColor" /></svg>
        <svg viewBox="0 0 14 14" width="14" height="14"><circle cx="4" cy="4" r="2" fill="none" stroke="currentColor" strokeWidth="1.5" /><path d="M9 6h3v4q-1 2-3 2 1-1 1-2H9z" fill="currentColor" /></svg>
        <svg viewBox="0 0 16 12" width="16" height="12"><path d="M1 1h14v10H1z" fill="none" stroke="currentColor" strokeWidth="2" /><path d="M3 4h10M3 6h10" stroke="currentColor" strokeDasharray="2 1" /><path d="M5 9h6" stroke="currentColor" /></svg>
        <svg viewBox="0 0 13 14" width="13" height="14"><circle cx="6.500" cy="3.500" r="3" fill="#a8c4ec" /><path d="M1 14q-1-7 5.500-7T12 14z" fill="#a8c4ec" /></svg>
        <svg viewBox="0 0 14 13" width="14" height="13"><path d="M4 0q3 3 6 0l4 3-2 3-2-1v8H4V5L2 6 0 3z" fill="currentColor" /></svg>
        <svg viewBox="0 0 14 14" width="14" height="14"><path d="M1 13L8 6" stroke="currentColor" strokeWidth="3" /><path d="M13 3q1 6-5 5-2-3 0-6 2-2 4-1L9 3l2 2z" fill="currentColor" /></svg>
      </div>
    </div>
  );
}

const mono = "font-[Liberation_Mono] text-[13px]";

function Command() {
  return (
    <section className="relative mt-[3px] flex h-[59px] shrink-0 bg-[#f8f8f8]">
      <span className="flex w-4 shrink-0 justify-center rounded-l bg-[#a0a0a0] pt-[3px]"><span className="h-[4px] w-[12px] bg-[radial-gradient(#111_40%,transparent_45%)] bg-[length:2px_2px]" /></span>
      <div className="flex min-w-0 flex-1 flex-col">
        <div className="flex h-[39px] border-b border-[#a0a094]">
          <div className="min-w-0 flex-1 pl-[2px] text-base leading-[17px] whitespace-pre text-black">
            <p><Mixed latin={mono}>Autodesk DWG。  此文件上次由 Autodesk 应用程序或 Autodesk 许可的应用程序保存，是可靠的 DWG。</Mixed></p>
            <p><Mixed latin={mono}>{"命令:  <线宽 >"}</Mixed></p>
          </div>
          <div className="mr-[2px] flex w-4 flex-col justify-between bg-[#f0f0ec]"><Arrow dir="up" /><Arrow dir="down" /></div>
        </div>
        <div className="flex flex-1 items-center">
          <label htmlFor="cmd" className="pl-[2px] text-base leading-[17px]"><Mixed latin={mono}>命令:</Mixed></label>
          <input id="cmd" className="min-w-0 flex-1 bg-transparent outline-none" />
          <div className="mr-4 flex w-[67px] items-center bg-[#f0f0ec]"><Arrow dir="left" /><Thumb /><span className="flex-1" /><Arrow dir="right" /></div>
        </div>
      </div>
      <ImeBar />
    </section>
  );
}

const SBtn = ({ name, active }) => (
  <button type="button" aria-label={name} className={"flex w-[22px] shrink-0 items-center justify-center border-l border-[#444] " + (active ? "bg-[linear-gradient(#e4f0fa,#a8d4f0_70%,#d4e4f0)]" : "bg-[linear-gradient(#cfd3d8,#a8a8a8_60%,#b8b8b8)]")}>
    <Icon name={name} />
  </button>
);

function Status() {
  const wide = "flex shrink-0 items-center justify-center border-l border-[#444] bg-[linear-gradient(#cfd3d8,#a8a8a8_60%,#b8b8b8)]";
  return (
    <footer className="shrink-0">
      <div className="flex h-[22px] items-stretch overflow-hidden border-t border-[#111] bg-[linear-gradient(#777,#8c8c8c_40%,#7c7c7c)] text-xs leading-[22px] whitespace-nowrap text-black">
        <span className="w-[120px] shrink-0 pl-[6px]"><Mixed latin="font-[Liberation_Mono] text-[10px]">英科宇机械CAD2010</Mixed></span>
        <span className="w-[205px] shrink-0 font-[Liberation_Mono] text-[10px] whitespace-pre">3120.3469, 408.7876 , 0.0000</span>
        <SBtn name="sSn" /><SBtn name="sGr" /><SBtn name="sOr" /><SBtn name="sPo" />
        <SBtn name="sOs" active /><SBtn name="s3d" active /><SBtn name="sDu" active /><SBtn name="sDy" active />
        <SBtn name="sLw" /><SBtn name="sQp" />
        <span className="w-[12px] shrink-0 border-l border-[#444]" />
        <button type="button" className={wide + " w-[30px]"}>模型</button>
        <SBtn name="sL1" /><SBtn name="sL2" />
        <span className="w-[19px] shrink-0 border-l border-[#444]" />
        <SBtn name="pan" /><SBtn name="zoom" /><SBtn name="whl" /><SBtn name="mot" />
        <span className="w-[18px] shrink-0 border-l border-[#444]" />
        <button type="button" className={wide + " w-[53px] gap-[3px] font-[Liberation_Mono]"}><Icon name="ann" /><span className="text-[10px]">1:1</span><Caret color="#111" /></button>
        <SBtn name="annV" /><SBtn name="annA" />
        <span className="min-w-[6px] flex-1 border-l border-[#444]" />
        <button type="button" className={wide + " w-[100px] gap-[1px]"}><Icon name="gear" /><span><Mixed latin="font-[Liberation_Mono] text-[10px]">AutoCAD 经典</Mixed></span><Caret color="#111" /></button>
        <SBtn name="doc" />
        <button type="button" aria-label="Tray" className={wide + " w-[18px] pl-1"}><Caret color="#111" /></button>
        <SBtn name="win" />
      </div>
      <div className="flex h-[4px] border-t border-[#333]"><span className="w-[9%] bg-[#70b878]" /><span className="flex-1 bg-[#2878d8]" /><span className="w-[20%] bg-[#10c8f0]" /></div>
    </footer>
  );
}

export default function App() {
  return (
    <div className="relative flex h-screen w-full flex-col overflow-hidden bg-[#6a6a6a] font-['Noto_Sans_CJK_SC',sans-serif]">
      <Logo />
      <Header />
      <Toolbars />
      <Workspace />
      <Command />
      <Status />
    </div>
  );
}
